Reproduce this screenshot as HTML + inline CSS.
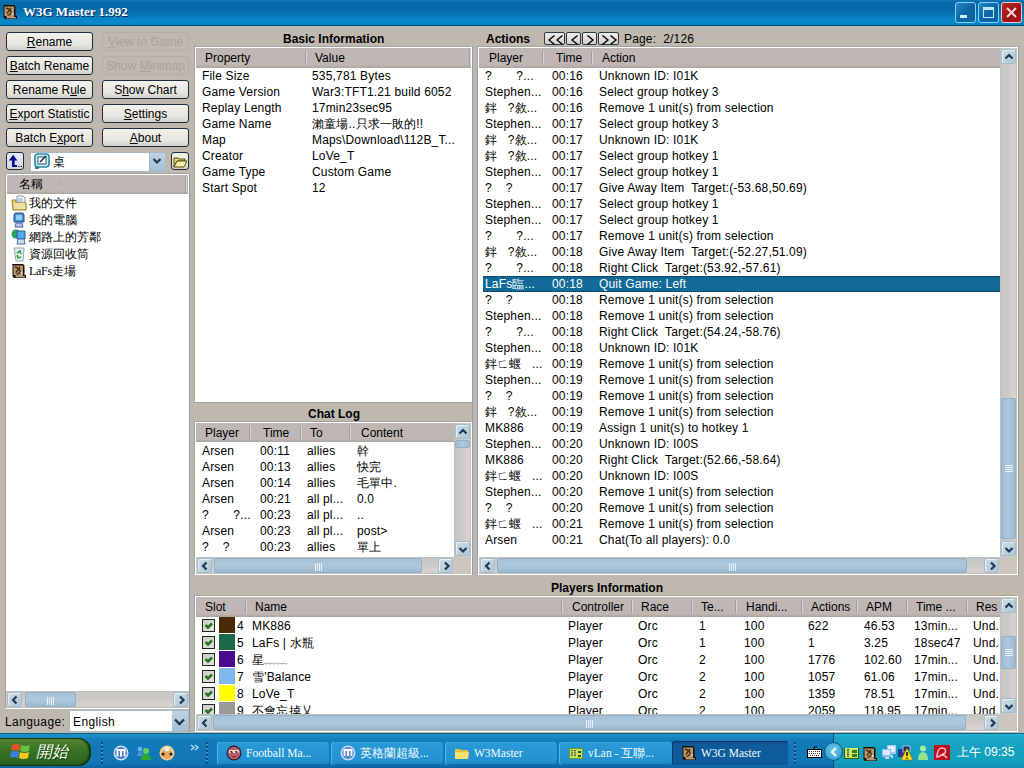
<!DOCTYPE html><html><head><meta charset="utf-8"><style>
*{margin:0;padding:0;box-sizing:border-box}
html,body{width:1024px;height:768px;overflow:hidden;background:#BFB8AF;font-family:"Liberation Sans",sans-serif;font-size:12px;color:#000}
.ab{position:absolute}
.t{position:absolute;white-space:nowrap;line-height:14px;letter-spacing:0.17px}
.btn{position:absolute;height:19px;border:1px solid #1C2C3C;border-radius:3px;background:linear-gradient(#F2F1EC,#E6E4DE 70%,#D2CFC8);text-align:center;line-height:18px;font-size:12px;white-space:nowrap}
.btn.dis{border-color:#B4AFA6;color:#A9A49C;background:#BFB8AF}
.box{position:absolute;border-top:1px solid #A6A29C;border-left:1px solid #A6A29C;border-right:1px solid #fff;border-bottom:1px solid #fff;background:#fff}
.box2{position:absolute;left:0;top:0;right:0;bottom:0;border-top:1px solid #fff;border-left:1px solid #fff}
.hdr{position:absolute;height:19px;background:linear-gradient(#BFB7B4,#BFB7B4 85%,#A9A39D);}
.hd{position:absolute;top:4px;white-space:nowrap;line-height:12px}
.dv{position:absolute;top:3px;width:1px;height:13px;background:#A49E98;box-shadow:1px 0 0 #D8D4CE}
.sb{position:absolute;width:15px;height:15px;border:1px solid #A8BCC8;border-radius:2px;background:linear-gradient(135deg,#CCDCE6,#B0C6D4);box-shadow:inset 1px 1px 0 #E4EEF4}
.trk{position:absolute;background:linear-gradient(90deg,#BCBAB6 0,#C8C6C2 1px,#CCCAC8 50%,#D8D4D0 88%,#BCBAB6 100%)}
.trkh{position:absolute;background:linear-gradient(#BCBAB6 0,#C8C6C2 1px,#CCCAC8 50%,#D8D4D0 88%,#BCBAB6 100%)}
.thumb{position:absolute;border:1px solid #98B0C4;border-radius:2px;background:linear-gradient(90deg,#9EBCD4,#AEC8DE 50%,#9CBAD2)}
.thumbh{position:absolute;border:1px solid #98B0C4;border-radius:2px;background:linear-gradient(#A4C2D8,#AEC8DE 50%,#9CBAD2)}
.title{position:absolute;font-weight:bold;white-space:nowrap;line-height:14px}
</style></head><body>
<div class="ab" style="left:0;top:0;width:1024px;height:25px;background:linear-gradient(#0C77B8 0px,#066CAB 2px,#0569A7 8px,#0874B6 14px,#0A84C8 19px,#0888CC 23px,#0880C0 25px)"></div>
<div class="ab" style="left:0;top:25px;width:1024px;height:1px;background:#0A4A72"></div>
<div class="ab" style="left:0;top:26px;width:1024px;height:1px;background:#B0C6CE"></div>
<svg class="ab" style="left:2px;top:4px" width="16" height="16" viewBox="0 0 16 16"><path d="M1 1h11l1.5 1.5V12H15v3H3l-1.5-1.5V2z" fill="#1A1008"/><path d="M2.5 2.5h9.5v10.5H4.5v-1H2.5z" fill="#B8966E"/><path d="M4 4q4 1 5 3.5T5.5 11.5M9 4L5 9.5" stroke="#4A2A10" stroke-width="1.3" fill="none"/><path d="M10 9l1.5 2" stroke="#F0E0C8" stroke-width="1.2"/><path d="M4.5 13.8h9.5" stroke="#E8D8C0" stroke-width="1"/></svg>
<div class="t" style="left:23px;top:5px;font-family:'Liberation Serif',serif;font-weight:bold;font-size:13px;letter-spacing:0;color:#fff;text-shadow:1px 1px 0 #0A2A5A">W3G Master 1.992</div>
<div class="ab" style="left:955px;top:2px;width:21px;height:21px;border:1px solid #7ED4F8;border-radius:3px;background:linear-gradient(135deg,#2A86C6,#0E66A6 50%,#0E609C)"><div class="ab" style="left:4px;top:12px;width:7px;height:3px;background:#C8ECFA"></div></div>
<div class="ab" style="left:978px;top:2px;width:21px;height:21px;border:1px solid #7ED4F8;border-radius:3px;background:linear-gradient(135deg,#2A86C6,#0E66A6 50%,#0E609C)"><div class="ab" style="left:4px;top:4px;width:11px;height:11px;border:1px solid #B8E8FA;border-top-width:3px"></div></div>
<div class="ab" style="left:1001px;top:2px;width:21px;height:21px;border:1px solid #F0C8C8;border-radius:3px;background:linear-gradient(135deg,#B82A22,#9A1212 60%,#A81814)"><svg class="ab" style="left:3px;top:3px" width="13" height="13"><path d="M2 2L11 11M11 2L2 11" stroke="#F8D4D4" stroke-width="2"/></svg></div>
<div class="btn" style="left:6px;top:32px;width:87px"><u>R</u>ename</div>
<div class="btn dis" style="left:102px;top:32px;width:87px"><u>V</u>iew In Game</div>
<div class="btn" style="left:6px;top:56px;width:87px"><u>B</u>atch Rename</div>
<div class="btn dis" style="left:102px;top:56px;width:87px">Show <u>M</u>inimap</div>
<div class="btn" style="left:6px;top:80px;width:87px">Rename R<u>u</u>le</div>
<div class="btn" style="left:102px;top:80px;width:87px">S<u>h</u>ow Chart</div>
<div class="btn" style="left:6px;top:104px;width:87px"><u>E</u>xport Statistic</div>
<div class="btn" style="left:102px;top:104px;width:87px"><u>S</u>ettings</div>
<div class="btn" style="left:6px;top:128px;width:87px">Batch E<u>x</u>port</div>
<div class="btn" style="left:102px;top:128px;width:87px"><u>A</u>bout</div>
<div class="btn" style="left:6px;top:152px;width:18px;height:18px;border-radius:3px;background:linear-gradient(#E8EEF4,#D0D8E4)"><svg class="ab" style="left:1px;top:1px" width="16" height="16"><path d="M0.8 6.6L5.2 0.8L9.4 6.6z" fill="#0A0A90"/><path d="M4 6h2.6v7H4zM4 11h5v2H4z" fill="#0A0A90"/><path d="M10.5 12.5h1.2M12.8 12.5h1.2" stroke="#000" stroke-width="1.2"/></svg></div>
<div class="ab" style="left:30px;top:152px;width:135px;height:20px;background:#fff;border:1px solid #A8B8C8;border-right:none"></div>
<div class="ab" style="left:149px;top:153px;width:16px;height:18px;background:linear-gradient(#C0D2E2,#A6BED4);border-left:1px solid #A0B4C8"><svg class="ab" style="left:0;top:0" width="15" height="15"><path d="M3.5 6L7 9.5L10.5 6" stroke="#1E3A56" stroke-width="2.2" fill="none"/></svg></div>
<svg class="ab" style="left:34px;top:153px" width="16" height="16" viewBox="0 0 16 16"><rect x="1" y="1" width="14" height="13" rx="3" fill="#C8ECF4" stroke="#2A8AA8" stroke-width="1.6"/><rect x="4" y="4" width="8" height="7" fill="#fff" stroke="#2A5A70"/><path d="M6 9L12 3" stroke="#0A2A40" stroke-width="1.5"/><path d="M1 15h4" stroke="#2A4A60" stroke-width="1.5"/></svg>
<div class="t" style="left:53px;top:155px;font-size:12px">桌</div>
<div class="btn" style="left:171px;top:152px;width:18px;height:18px"><svg class="ab" style="left:1px;top:2px" width="15" height="13"><path d="M1 3h4l1 1h6v2H4L1 12z" fill="#E8D880" stroke="#5A4A10"/><path d="M4 6h10l-3 6H1z" fill="#F8F0A0" stroke="#5A4A10"/></svg></div>
<div class="box" style="left:5px;top:173px;width:185px;height:536px"></div>
<div class="hdr" style="left:7px;top:175px;width:181px;height:19px"></div>
<div class="t" style="left:19px;top:177px;font-size:12px">名稱</div>
<div class="dv" style="left:185px;top:176px;height:16px"></div>
<div class="ab" style="left:56px;top:181px;width:0;height:0;border-left:4px solid transparent;border-right:4px solid transparent;border-bottom:4px solid #B8B0AA"></div>
<svg class="ab" style="left:11px;top:195px" width="16" height="16" viewBox="0 0 16 16"><path d="M6 1h6l2 2v5H6z" fill="#F4F8FC" stroke="#8090A0"/><path d="M7 4h5M7 6h5" stroke="#90A0B0"/><path d="M1 5h4v3h10v7H2z" fill="#E8CC70" stroke="#A08030"/><path d="M3 8h11v6H3z" fill="#F0E0A0"/></svg>
<div class="t" style="left:29px;top:196px;font-size:12px;letter-spacing:0">我的文件</div>
<svg class="ab" style="left:11px;top:212px" width="16" height="16" viewBox="0 0 16 16"><path d="M4 1h8l1 2v7H3V3z" fill="#4A90D8" stroke="#2A4A80"/><path d="M5 3h6v5H5z" fill="#90D0F8"/><path d="M5 11h6l1 4H4z" fill="#C0C8E8" stroke="#5060A0"/></svg>
<div class="t" style="left:29px;top:213px;font-size:12px;letter-spacing:0">我的電腦</div>
<svg class="ab" style="left:11px;top:229px" width="16" height="16" viewBox="0 0 16 16"><circle cx="5" cy="5" r="4.5" fill="#30A060"/><path d="M6 2h8v8H6z" fill="#50A8E8" stroke="#2A5AA0"/><path d="M7 10h6l1 5H6z" fill="#D0DCF0" stroke="#4A6AB0"/></svg>
<div class="t" style="left:29px;top:230px;font-size:12px;letter-spacing:0">網路上的芳鄰</div>
<svg class="ab" style="left:11px;top:246px" width="16" height="16" viewBox="0 0 16 16"><path d="M3 2h10l-1 13H5z" fill="#E4EEF0" stroke="#90A8A8"/><path d="M6 7l3-2 1 3M10 11l-3 1-1-3" stroke="#30A040" stroke-width="1.6" fill="none"/></svg>
<div class="t" style="left:29px;top:247px;font-size:12px;letter-spacing:0">資源回收筒</div>
<svg class="ab" style="left:11px;top:263px" width="16" height="16" viewBox="0 0 16 16"><path d="M1 1h11l1.5 1.5V12H15v3H3l-1.5-1.5V2z" fill="#1A1008"/><path d="M2.5 2.5h9.5v10.5H4.5v-1H2.5z" fill="#B8966E"/><path d="M4 4q4 1 5 3.5T5.5 11.5M9 4L5 9.5" stroke="#4A2A10" stroke-width="1.3" fill="none"/><path d="M10 9l1.5 2" stroke="#F0E0C8" stroke-width="1.2"/><path d="M4.5 13.8h9.5" stroke="#E8D8C0" stroke-width="1"/></svg>
<div class="t" style="left:29px;top:264px;font-size:12px;letter-spacing:0"><span style="font-family:'Liberation Serif',serif;letter-spacing:-0.3px">LaFs</span>走場</div>
<div class="trkh" style="left:6px;top:691px;width:183px;height:17px"></div>
<div class="sb" style="left:7px;top:692px;width:15px;height:15px"><svg class="ab" style="left:0;top:0" width="15" height="15"><path d="M8.5 3.5L5 7L8.5 10.5" stroke="#1E3A56" stroke-width="2.2" fill="none"/></svg></div>
<div class="sb" style="left:173px;top:692px;width:15px;height:15px"><svg class="ab" style="left:0;top:0" width="15" height="15"><path d="M6 3.5L9.5 7L6 10.5" stroke="#1E3A56" stroke-width="2.2" fill="none"/></svg></div>
<div class="thumbh" style="left:25px;top:692px;width:51px;height:15px"><div class="ab" style="left:21px;top:4px;width:7px;height:8px;background:repeating-linear-gradient(90deg,#E8F0F8 0 1px,transparent 1px 2px)"></div></div>
<div class="t" style="left:5px;top:715px;font-size:12px;letter-spacing:0.4px">Language:</div>
<div class="ab" style="left:69px;top:710px;width:120px;height:22px;background:#fff;border:1px solid #A8B8C8"></div>
<div class="ab" style="left:172px;top:711px;width:16px;height:20px;background:linear-gradient(#C0D2E2,#A6BED4)"><svg class="ab" style="left:0;top:3px" width="15" height="15"><path d="M3 5.5L7.5 10L12 5.5" stroke="#1E3A56" stroke-width="2.4" fill="none"/></svg></div>
<div class="t" style="left:73px;top:715px;font-size:12px;letter-spacing:0.4px">English</div>
<div class="ab" style="left:189px;top:173px;width:5px;height:559px;background:#B8B8B2;border-left:1px solid #9A9A98"></div>
<div class="ab" style="left:472px;top:46px;width:5px;height:529px;background:#B4B8BA;border-left:1px solid #9A9C9E"></div>
<div class="title" style="left:283px;top:32px">Basic Information</div>
<div class="box" style="left:194px;top:46px;width:278px;height:356px"></div>
<div class="ab" style="left:194px;top:402px;width:278px;height:1px;background:#A0A2A2"></div>
<div class="hdr" style="left:196px;top:48px;width:275px;height:20px"></div>
<div class="hd" style="left:205px;top:52px">Property</div>
<div class="dv" style="left:305px;top:51px"></div>
<div class="dv" style="left:469px;top:49px;height:16px"></div>
<div class="hd" style="left:315px;top:52px">Value</div>
<div class="t" style="left:202px;top:69px">File Size</div>
<div class="t" style="left:312px;top:69px">535,781 Bytes</div>
<div class="t" style="left:202px;top:85px">Game Version</div>
<div class="t" style="left:312px;top:85px">War3:TFT1.21 build 6052</div>
<div class="t" style="left:202px;top:101px">Replay Length</div>
<div class="t" style="left:312px;top:101px">17min23sec95</div>
<div class="t" style="left:202px;top:117px">Game Name</div>
<div class="t" style="left:312px;top:117px">瀨童場..只求一敗的!!</div>
<div class="t" style="left:202px;top:133px">Map</div>
<div class="t" style="left:312px;top:133px">Maps\Download\112B_T...</div>
<div class="t" style="left:202px;top:149px">Creator</div>
<div class="t" style="left:312px;top:149px">LoVe_T</div>
<div class="t" style="left:202px;top:165px">Game Type</div>
<div class="t" style="left:312px;top:165px">Custom Game</div>
<div class="t" style="left:202px;top:181px">Start Spot</div>
<div class="t" style="left:312px;top:181px">12</div>
<div class="title" style="left:308px;top:407px">Chat Log</div>
<div class="box" style="left:194px;top:421px;width:278px;height:154px"></div>
<div class="hdr" style="left:196px;top:423px;width:259px;height:19px"></div>
<div class="hd" style="left:205px;top:427px">Player</div>
<div class="hd" style="left:263px;top:427px">Time</div>
<div class="hd" style="left:310px;top:427px">To</div>
<div class="hd" style="left:361px;top:427px">Content</div>
<div class="dv" style="left:249px;top:426px"></div>
<div class="dv" style="left:300px;top:426px"></div>
<div class="dv" style="left:349px;top:426px"></div>
<div class="t" style="left:202px;top:444px;white-space:pre">Arsen</div>
<div class="t" style="left:260px;top:444px;white-space:pre">00:11</div>
<div class="t" style="left:307px;top:444px;white-space:pre">allies</div>
<div class="t" style="left:357px;top:444px;white-space:pre">幹</div>
<div class="t" style="left:202px;top:460px;white-space:pre">Arsen</div>
<div class="t" style="left:260px;top:460px;white-space:pre">00:13</div>
<div class="t" style="left:307px;top:460px;white-space:pre">allies</div>
<div class="t" style="left:357px;top:460px;white-space:pre">快完</div>
<div class="t" style="left:202px;top:476px;white-space:pre">Arsen</div>
<div class="t" style="left:260px;top:476px;white-space:pre">00:14</div>
<div class="t" style="left:307px;top:476px;white-space:pre">allies</div>
<div class="t" style="left:357px;top:476px;white-space:pre">毛單中.</div>
<div class="t" style="left:202px;top:492px;white-space:pre">Arsen</div>
<div class="t" style="left:260px;top:492px;white-space:pre">00:21</div>
<div class="t" style="left:307px;top:492px;white-space:pre">all pl...</div>
<div class="t" style="left:357px;top:492px;white-space:pre">0.0</div>
<div class="t" style="left:202px;top:508px;white-space:pre">?       ?...</div>
<div class="t" style="left:260px;top:508px;white-space:pre">00:23</div>
<div class="t" style="left:307px;top:508px;white-space:pre">all pl...</div>
<div class="t" style="left:357px;top:508px;white-space:pre">..</div>
<div class="t" style="left:202px;top:524px;white-space:pre">Arsen</div>
<div class="t" style="left:260px;top:524px;white-space:pre">00:23</div>
<div class="t" style="left:307px;top:524px;white-space:pre">all pl...</div>
<div class="t" style="left:357px;top:524px;white-space:pre">post&gt;</div>
<div class="t" style="left:202px;top:540px;white-space:pre">?    ?</div>
<div class="t" style="left:260px;top:540px;white-space:pre">00:23</div>
<div class="t" style="left:307px;top:540px;white-space:pre">allies</div>
<div class="t" style="left:357px;top:540px;white-space:pre">單上</div>
<div class="trk" style="left:454px;top:423px;width:17px;height:134px"></div>
<div class="sb" style="left:455px;top:424px;width:15px;height:15px"><svg class="ab" style="left:0;top:0" width="15" height="15"><path d="M3.5 8.5L7 5L10.5 8.5" stroke="#1E3A56" stroke-width="2.2" fill="none"/></svg></div>
<div class="sb" style="left:455px;top:541px;width:15px;height:15px"><svg class="ab" style="left:0;top:0" width="15" height="15"><path d="M3.5 6L7 9.5L10.5 6" stroke="#1E3A56" stroke-width="2.2" fill="none"/></svg></div>
<div class="thumb" style="left:455px;top:440px;width:15px;height:8px"></div>
<div class="trkh" style="left:196px;top:557px;width:258px;height:17px"></div>
<div class="sb" style="left:197px;top:558px;width:15px;height:15px"><svg class="ab" style="left:0;top:0" width="15" height="15"><path d="M8.5 3.5L5 7L8.5 10.5" stroke="#1E3A56" stroke-width="2.2" fill="none"/></svg></div>
<div class="sb" style="left:438px;top:558px;width:15px;height:15px"><svg class="ab" style="left:0;top:0" width="15" height="15"><path d="M6 3.5L9.5 7L6 10.5" stroke="#1E3A56" stroke-width="2.2" fill="none"/></svg></div>
<div class="thumbh" style="left:214px;top:558px;width:208px;height:15px"><div class="ab" style="left:100px;top:4px;width:7px;height:8px;background:repeating-linear-gradient(90deg,#E8F0F8 0 1px,transparent 1px 2px)"></div></div>
<div class="ab" style="left:454px;top:557px;width:17px;height:17px;background:#CCC6BE"></div>
<div class="title" style="left:486px;top:32px">Actions</div>
<div class="ab" style="left:544px;top:32px;width:21px;height:13px;border:1px solid #2A3A4A;border-radius:2px;background:linear-gradient(#ECECE8,#D4D2CC)"></div>
<div class="ab" style="left:566px;top:32px;width:15px;height:13px;border:1px solid #2A3A4A;border-radius:2px;background:linear-gradient(#ECECE8,#D4D2CC)"></div>
<div class="ab" style="left:582px;top:32px;width:15px;height:13px;border:1px solid #2A3A4A;border-radius:2px;background:linear-gradient(#ECECE8,#D4D2CC)"></div>
<div class="ab" style="left:598px;top:32px;width:21px;height:13px;border:1px solid #2A3A4A;border-radius:2px;background:linear-gradient(#ECECE8,#D4D2CC)"></div>
<svg class="ab" style="left:547.5px;top:34px" width="8" height="12"><path d="M6.5 1.5L1 6L6.5 10.5" stroke="#000" stroke-width="1.4" fill="none"/></svg>
<svg class="ab" style="left:555.5px;top:34px" width="8" height="12"><path d="M6.5 1.5L1 6L6.5 10.5" stroke="#000" stroke-width="1.4" fill="none"/></svg>
<svg class="ab" style="left:570.5px;top:34px" width="8" height="12"><path d="M6.5 1.5L1 6L6.5 10.5" stroke="#000" stroke-width="1.4" fill="none"/></svg>
<svg class="ab" style="left:586.5px;top:34px" width="8" height="12"><path d="M0.5 1.5L6 6L0.5 10.5" stroke="#000" stroke-width="1.4" fill="none"/></svg>
<svg class="ab" style="left:601.5px;top:34px" width="8" height="12"><path d="M0.5 1.5L6 6L0.5 10.5" stroke="#000" stroke-width="1.4" fill="none"/></svg>
<svg class="ab" style="left:609.5px;top:34px" width="8" height="12"><path d="M0.5 1.5L6 6L0.5 10.5" stroke="#000" stroke-width="1.4" fill="none"/></svg>
<div class="t" style="left:624px;top:32px;white-space:pre">Page:  2/126</div>
<div class="box" style="left:477px;top:46px;width:541px;height:529px"></div>
<div class="hdr" style="left:479px;top:48px;width:522px;height:20px"></div>
<div class="hd" style="left:489px;top:52px">Player</div>
<div class="hd" style="left:556px;top:52px">Time</div>
<div class="hd" style="left:602px;top:52px">Action</div>
<div class="dv" style="left:542px;top:51px"></div>
<div class="dv" style="left:591px;top:51px"></div>
<div class="t" style="left:485px;top:69px;white-space:pre;color:#000">?       ?...</div>
<div class="t" style="left:552px;top:69px;white-space:pre;color:#000">00:16</div>
<div class="t" style="left:599px;top:69px;white-space:pre;color:#000">Unknown ID: I01K</div>
<div class="t" style="left:485px;top:85px;white-space:pre;color:#000">Stephen...</div>
<div class="t" style="left:552px;top:85px;white-space:pre;color:#000">00:16</div>
<div class="t" style="left:599px;top:85px;white-space:pre;color:#000">Select group hotkey 3</div>
<div class="t" style="left:485px;top:101px;white-space:pre;color:#000">鉡   ?敘...</div>
<div class="t" style="left:552px;top:101px;white-space:pre;color:#000">00:16</div>
<div class="t" style="left:599px;top:101px;white-space:pre;color:#000">Remove 1 unit(s) from selection</div>
<div class="t" style="left:485px;top:117px;white-space:pre;color:#000">Stephen...</div>
<div class="t" style="left:552px;top:117px;white-space:pre;color:#000">00:17</div>
<div class="t" style="left:599px;top:117px;white-space:pre;color:#000">Select group hotkey 3</div>
<div class="t" style="left:485px;top:133px;white-space:pre;color:#000">鉡   ?敘...</div>
<div class="t" style="left:552px;top:133px;white-space:pre;color:#000">00:17</div>
<div class="t" style="left:599px;top:133px;white-space:pre;color:#000">Unknown ID: I01K</div>
<div class="t" style="left:485px;top:149px;white-space:pre;color:#000">鉡   ?敘...</div>
<div class="t" style="left:552px;top:149px;white-space:pre;color:#000">00:17</div>
<div class="t" style="left:599px;top:149px;white-space:pre;color:#000">Select group hotkey 1</div>
<div class="t" style="left:485px;top:165px;white-space:pre;color:#000">Stephen...</div>
<div class="t" style="left:552px;top:165px;white-space:pre;color:#000">00:17</div>
<div class="t" style="left:599px;top:165px;white-space:pre;color:#000">Select group hotkey 1</div>
<div class="t" style="left:485px;top:181px;white-space:pre;color:#000">?    ?</div>
<div class="t" style="left:552px;top:181px;white-space:pre;color:#000">00:17</div>
<div class="t" style="left:599px;top:181px;white-space:pre;color:#000">Give Away Item  Target:(-53.68,50.69)</div>
<div class="t" style="left:485px;top:197px;white-space:pre;color:#000">Stephen...</div>
<div class="t" style="left:552px;top:197px;white-space:pre;color:#000">00:17</div>
<div class="t" style="left:599px;top:197px;white-space:pre;color:#000">Select group hotkey 1</div>
<div class="t" style="left:485px;top:213px;white-space:pre;color:#000">Stephen...</div>
<div class="t" style="left:552px;top:213px;white-space:pre;color:#000">00:17</div>
<div class="t" style="left:599px;top:213px;white-space:pre;color:#000">Select group hotkey 1</div>
<div class="t" style="left:485px;top:229px;white-space:pre;color:#000">?       ?...</div>
<div class="t" style="left:552px;top:229px;white-space:pre;color:#000">00:17</div>
<div class="t" style="left:599px;top:229px;white-space:pre;color:#000">Remove 1 unit(s) from selection</div>
<div class="t" style="left:485px;top:245px;white-space:pre;color:#000">鉡   ?敘...</div>
<div class="t" style="left:552px;top:245px;white-space:pre;color:#000">00:18</div>
<div class="t" style="left:599px;top:245px;white-space:pre;color:#000">Give Away Item  Target:(-52.27,51.09)</div>
<div class="t" style="left:485px;top:261px;white-space:pre;color:#000">?       ?...</div>
<div class="t" style="left:552px;top:261px;white-space:pre;color:#000">00:18</div>
<div class="t" style="left:599px;top:261px;white-space:pre;color:#000">Right Click  Target:(53.92,-57.61)</div>
<div class="ab" style="left:483px;top:276px;width:517px;height:16px;background:#126A98;border-top:1px dotted #0A3040;border-bottom:1px dotted #0A3040"></div>
<div class="t" style="left:485px;top:277px;white-space:pre;color:#fff">LaFs臨...</div>
<div class="t" style="left:552px;top:277px;white-space:pre;color:#fff">00:18</div>
<div class="t" style="left:599px;top:277px;white-space:pre;color:#fff">Quit Game: Left</div>
<div class="t" style="left:485px;top:293px;white-space:pre;color:#000">?    ?</div>
<div class="t" style="left:552px;top:293px;white-space:pre;color:#000">00:18</div>
<div class="t" style="left:599px;top:293px;white-space:pre;color:#000">Remove 1 unit(s) from selection</div>
<div class="t" style="left:485px;top:309px;white-space:pre;color:#000">Stephen...</div>
<div class="t" style="left:552px;top:309px;white-space:pre;color:#000">00:18</div>
<div class="t" style="left:599px;top:309px;white-space:pre;color:#000">Remove 1 unit(s) from selection</div>
<div class="t" style="left:485px;top:325px;white-space:pre;color:#000">?       ?...</div>
<div class="t" style="left:552px;top:325px;white-space:pre;color:#000">00:18</div>
<div class="t" style="left:599px;top:325px;white-space:pre;color:#000">Right Click  Target:(54.24,-58.76)</div>
<div class="t" style="left:485px;top:341px;white-space:pre;color:#000">Stephen...</div>
<div class="t" style="left:552px;top:341px;white-space:pre;color:#000">00:18</div>
<div class="t" style="left:599px;top:341px;white-space:pre;color:#000">Unknown ID: I01K</div>
<div class="t" style="left:485px;top:357px;white-space:pre;color:#000">鉡ㄈ蝘   ...</div>
<div class="t" style="left:552px;top:357px;white-space:pre;color:#000">00:19</div>
<div class="t" style="left:599px;top:357px;white-space:pre;color:#000">Remove 1 unit(s) from selection</div>
<div class="t" style="left:485px;top:373px;white-space:pre;color:#000">Stephen...</div>
<div class="t" style="left:552px;top:373px;white-space:pre;color:#000">00:19</div>
<div class="t" style="left:599px;top:373px;white-space:pre;color:#000">Remove 1 unit(s) from selection</div>
<div class="t" style="left:485px;top:389px;white-space:pre;color:#000">?    ?</div>
<div class="t" style="left:552px;top:389px;white-space:pre;color:#000">00:19</div>
<div class="t" style="left:599px;top:389px;white-space:pre;color:#000">Remove 1 unit(s) from selection</div>
<div class="t" style="left:485px;top:405px;white-space:pre;color:#000">鉡   ?敘...</div>
<div class="t" style="left:552px;top:405px;white-space:pre;color:#000">00:19</div>
<div class="t" style="left:599px;top:405px;white-space:pre;color:#000">Remove 1 unit(s) from selection</div>
<div class="t" style="left:485px;top:421px;white-space:pre;color:#000">MK886</div>
<div class="t" style="left:552px;top:421px;white-space:pre;color:#000">00:19</div>
<div class="t" style="left:599px;top:421px;white-space:pre;color:#000">Assign 1 unit(s) to hotkey 1</div>
<div class="t" style="left:485px;top:437px;white-space:pre;color:#000">Stephen...</div>
<div class="t" style="left:552px;top:437px;white-space:pre;color:#000">00:20</div>
<div class="t" style="left:599px;top:437px;white-space:pre;color:#000">Unknown ID: I00S</div>
<div class="t" style="left:485px;top:453px;white-space:pre;color:#000">MK886</div>
<div class="t" style="left:552px;top:453px;white-space:pre;color:#000">00:20</div>
<div class="t" style="left:599px;top:453px;white-space:pre;color:#000">Right Click  Target:(52.66,-58.64)</div>
<div class="t" style="left:485px;top:469px;white-space:pre;color:#000">鉡ㄈ蝘   ...</div>
<div class="t" style="left:552px;top:469px;white-space:pre;color:#000">00:20</div>
<div class="t" style="left:599px;top:469px;white-space:pre;color:#000">Unknown ID: I00S</div>
<div class="t" style="left:485px;top:485px;white-space:pre;color:#000">Stephen...</div>
<div class="t" style="left:552px;top:485px;white-space:pre;color:#000">00:20</div>
<div class="t" style="left:599px;top:485px;white-space:pre;color:#000">Remove 1 unit(s) from selection</div>
<div class="t" style="left:485px;top:501px;white-space:pre;color:#000">?    ?</div>
<div class="t" style="left:552px;top:501px;white-space:pre;color:#000">00:20</div>
<div class="t" style="left:599px;top:501px;white-space:pre;color:#000">Remove 1 unit(s) from selection</div>
<div class="t" style="left:485px;top:517px;white-space:pre;color:#000">鉡ㄈ蝘   ...</div>
<div class="t" style="left:552px;top:517px;white-space:pre;color:#000">00:21</div>
<div class="t" style="left:599px;top:517px;white-space:pre;color:#000">Remove 1 unit(s) from selection</div>
<div class="t" style="left:485px;top:533px;white-space:pre;color:#000">Arsen</div>
<div class="t" style="left:552px;top:533px;white-space:pre;color:#000">00:21</div>
<div class="t" style="left:599px;top:533px;white-space:pre;color:#000">Chat(To all players): 0.0</div>
<div class="trk" style="left:1000px;top:48px;width:17px;height:509px"></div>
<div class="sb" style="left:1001px;top:49px;width:15px;height:15px"><svg class="ab" style="left:0;top:0" width="15" height="15"><path d="M3.5 8.5L7 5L10.5 8.5" stroke="#1E3A56" stroke-width="2.2" fill="none"/></svg></div>
<div class="sb" style="left:1001px;top:541px;width:15px;height:15px"><svg class="ab" style="left:0;top:0" width="15" height="15"><path d="M3.5 6L7 9.5L10.5 6" stroke="#1E3A56" stroke-width="2.2" fill="none"/></svg></div>
<div class="thumb" style="left:1001px;top:398px;width:15px;height:141px"><div class="ab" style="left:3px;top:66px;width:8px;height:7px;background:repeating-linear-gradient(#E8F0F8 0 1px,transparent 1px 2px)"></div></div>
<div class="ab" style="left:1018px;top:46px;width:1px;height:529px;background:#949898"></div>
<div class="trkh" style="left:479px;top:557px;width:521px;height:17px"></div>
<div class="sb" style="left:480px;top:558px;width:15px;height:15px"><svg class="ab" style="left:0;top:0" width="15" height="15"><path d="M8.5 3.5L5 7L8.5 10.5" stroke="#1E3A56" stroke-width="2.2" fill="none"/></svg></div>
<div class="sb" style="left:984px;top:558px;width:15px;height:15px"><svg class="ab" style="left:0;top:0" width="15" height="15"><path d="M6 3.5L9.5 7L6 10.5" stroke="#1E3A56" stroke-width="2.2" fill="none"/></svg></div>
<div class="thumbh" style="left:497px;top:558px;width:470px;height:15px"><div class="ab" style="left:231px;top:4px;width:7px;height:8px;background:repeating-linear-gradient(90deg,#E8F0F8 0 1px,transparent 1px 2px)"></div></div>
<div class="ab" style="left:1000px;top:557px;width:17px;height:17px;background:#CCC6BE"></div>
<div class="title" style="left:551px;top:581px">Players Information</div>
<div class="box" style="left:194px;top:595px;width:824px;height:137px"></div>
<div class="hdr" style="left:196px;top:597px;width:805px;height:20px"></div>
<div class="hd" style="left:205px;top:601px">Slot</div>
<div class="hd" style="left:255px;top:601px">Name</div>
<div class="hd" style="left:572px;top:601px">Controller</div>
<div class="hd" style="left:641px;top:601px">Race</div>
<div class="hd" style="left:701px;top:601px">Te...</div>
<div class="hd" style="left:746px;top:601px">Handi...</div>
<div class="hd" style="left:811px;top:601px">Actions</div>
<div class="hd" style="left:866px;top:601px">APM</div>
<div class="hd" style="left:916px;top:601px">Time ...</div>
<div class="hd" style="left:976px;top:601px">Res</div>
<div class="dv" style="left:245px;top:600px"></div>
<div class="dv" style="left:561px;top:600px"></div>
<div class="dv" style="left:631px;top:600px"></div>
<div class="dv" style="left:691px;top:600px"></div>
<div class="dv" style="left:735px;top:600px"></div>
<div class="dv" style="left:801px;top:600px"></div>
<div class="dv" style="left:856px;top:600px"></div>
<div class="dv" style="left:906px;top:600px"></div>
<div class="dv" style="left:966px;top:600px"></div>
<div class="ab" style="left:196px;top:616px;width:805px;height:98px;overflow:hidden">
<div class="ab" style="left:6px;top:3px;width:13px;height:13px;border:1px solid #1C2A1C;background:linear-gradient(135deg,#C8D0C8,#E0E4DC)"><svg class="ab" style="left:0px;top:0px" width="11" height="11"><path d="M2.5 5L5 7.5L9 3.5" stroke="#2E6A28" stroke-width="2.6" fill="none"/></svg></div>
<div class="ab" style="left:23px;top:1px;width:16px;height:16px;background:#4A2A08"></div>
<div class="t" style="left:41px;top:3px">4</div>
<div class="t" style="left:56px;top:3px">MK886</div>
<div class="t" style="left:372px;top:3px">Player</div>
<div class="t" style="left:442px;top:3px">Orc</div>
<div class="t" style="left:503px;top:3px">1</div>
<div class="t" style="left:548px;top:3px">100</div>
<div class="t" style="left:612px;top:3px">622</div>
<div class="t" style="left:668px;top:3px">46.53</div>
<div class="t" style="left:718px;top:3px">13min...</div>
<div class="t" style="left:777px;top:3px">Und.</div>
<div class="ab" style="left:6px;top:20px;width:13px;height:13px;border:1px solid #1C2A1C;background:linear-gradient(135deg,#C8D0C8,#E0E4DC)"><svg class="ab" style="left:0px;top:0px" width="11" height="11"><path d="M2.5 5L5 7.5L9 3.5" stroke="#2E6A28" stroke-width="2.6" fill="none"/></svg></div>
<div class="ab" style="left:23px;top:18px;width:16px;height:16px;background:#1A6A4A"></div>
<div class="t" style="left:41px;top:20px">5</div>
<div class="t" style="left:56px;top:20px">LaFs | 水瓶</div>
<div class="t" style="left:372px;top:20px">Player</div>
<div class="t" style="left:442px;top:20px">Orc</div>
<div class="t" style="left:503px;top:20px">1</div>
<div class="t" style="left:548px;top:20px">100</div>
<div class="t" style="left:612px;top:20px">1</div>
<div class="t" style="left:668px;top:20px">3.25</div>
<div class="t" style="left:718px;top:20px">18sec47</div>
<div class="t" style="left:777px;top:20px">Und.</div>
<div class="ab" style="left:6px;top:37px;width:13px;height:13px;border:1px solid #1C2A1C;background:linear-gradient(135deg,#C8D0C8,#E0E4DC)"><svg class="ab" style="left:0px;top:0px" width="11" height="11"><path d="M2.5 5L5 7.5L9 3.5" stroke="#2E6A28" stroke-width="2.6" fill="none"/></svg></div>
<div class="ab" style="left:23px;top:35px;width:16px;height:16px;background:#4A0A90"></div>
<div class="t" style="left:41px;top:37px">6</div>
<div class="t" style="left:56px;top:37px">星﹏﹏</div>
<div class="t" style="left:372px;top:37px">Player</div>
<div class="t" style="left:442px;top:37px">Orc</div>
<div class="t" style="left:503px;top:37px">2</div>
<div class="t" style="left:548px;top:37px">100</div>
<div class="t" style="left:612px;top:37px">1776</div>
<div class="t" style="left:668px;top:37px">102.60</div>
<div class="t" style="left:718px;top:37px">17min...</div>
<div class="t" style="left:777px;top:37px">Und.</div>
<div class="ab" style="left:6px;top:54px;width:13px;height:13px;border:1px solid #1C2A1C;background:linear-gradient(135deg,#C8D0C8,#E0E4DC)"><svg class="ab" style="left:0px;top:0px" width="11" height="11"><path d="M2.5 5L5 7.5L9 3.5" stroke="#2E6A28" stroke-width="2.6" fill="none"/></svg></div>
<div class="ab" style="left:23px;top:52px;width:16px;height:16px;background:#80B8F0"></div>
<div class="t" style="left:41px;top:54px">7</div>
<div class="t" style="left:56px;top:54px">雪&#x27;Balance</div>
<div class="t" style="left:372px;top:54px">Player</div>
<div class="t" style="left:442px;top:54px">Orc</div>
<div class="t" style="left:503px;top:54px">2</div>
<div class="t" style="left:548px;top:54px">100</div>
<div class="t" style="left:612px;top:54px">1057</div>
<div class="t" style="left:668px;top:54px">61.06</div>
<div class="t" style="left:718px;top:54px">17min...</div>
<div class="t" style="left:777px;top:54px">Und.</div>
<div class="ab" style="left:6px;top:71px;width:13px;height:13px;border:1px solid #1C2A1C;background:linear-gradient(135deg,#C8D0C8,#E0E4DC)"><svg class="ab" style="left:0px;top:0px" width="11" height="11"><path d="M2.5 5L5 7.5L9 3.5" stroke="#2E6A28" stroke-width="2.6" fill="none"/></svg></div>
<div class="ab" style="left:23px;top:69px;width:16px;height:16px;background:#FFFF00"></div>
<div class="t" style="left:41px;top:71px">8</div>
<div class="t" style="left:56px;top:71px">LoVe_T</div>
<div class="t" style="left:372px;top:71px">Player</div>
<div class="t" style="left:442px;top:71px">Orc</div>
<div class="t" style="left:503px;top:71px">2</div>
<div class="t" style="left:548px;top:71px">100</div>
<div class="t" style="left:612px;top:71px">1359</div>
<div class="t" style="left:668px;top:71px">78.51</div>
<div class="t" style="left:718px;top:71px">17min...</div>
<div class="t" style="left:777px;top:71px">Und.</div>
<div class="ab" style="left:6px;top:88px;width:13px;height:13px;border:1px solid #1C2A1C;background:linear-gradient(135deg,#C8D0C8,#E0E4DC)"><svg class="ab" style="left:0px;top:0px" width="11" height="11"><path d="M2.5 5L5 7.5L9 3.5" stroke="#2E6A28" stroke-width="2.6" fill="none"/></svg></div>
<div class="ab" style="left:23px;top:86px;width:16px;height:16px;background:#9A9A9A"></div>
<div class="t" style="left:41px;top:88px">9</div>
<div class="t" style="left:56px;top:88px">不會忘掉乂</div>
<div class="t" style="left:372px;top:88px">Player</div>
<div class="t" style="left:442px;top:88px">Orc</div>
<div class="t" style="left:503px;top:88px">2</div>
<div class="t" style="left:548px;top:88px">100</div>
<div class="t" style="left:612px;top:88px">2059</div>
<div class="t" style="left:668px;top:88px">118.95</div>
<div class="t" style="left:718px;top:88px">17min...</div>
<div class="t" style="left:777px;top:88px">Und.</div>
</div>
<div class="trk" style="left:1000px;top:597px;width:17px;height:117px"></div>
<div class="sb" style="left:1001px;top:598px;width:15px;height:15px"><svg class="ab" style="left:0;top:0" width="15" height="15"><path d="M3.5 8.5L7 5L10.5 8.5" stroke="#1E3A56" stroke-width="2.2" fill="none"/></svg></div>
<div class="sb" style="left:1001px;top:698px;width:15px;height:15px"><svg class="ab" style="left:0;top:0" width="15" height="15"><path d="M3.5 6L7 9.5L10.5 6" stroke="#1E3A56" stroke-width="2.2" fill="none"/></svg></div>
<div class="thumb" style="left:1001px;top:636px;width:15px;height:33px"><div class="ab" style="left:3px;top:12px;width:8px;height:7px;background:repeating-linear-gradient(#E8F0F8 0 1px,transparent 1px 2px)"></div></div>
<div class="trkh" style="left:196px;top:714px;width:804px;height:17px"></div>
<div class="sb" style="left:197px;top:715px;width:15px;height:15px"><svg class="ab" style="left:0;top:0" width="15" height="15"><path d="M8.5 3.5L5 7L8.5 10.5" stroke="#1E3A56" stroke-width="2.2" fill="none"/></svg></div>
<div class="sb" style="left:984px;top:715px;width:15px;height:15px"><svg class="ab" style="left:0;top:0" width="15" height="15"><path d="M6 3.5L9.5 7L6 10.5" stroke="#1E3A56" stroke-width="2.2" fill="none"/></svg></div>
<div class="thumbh" style="left:213px;top:715px;width:753px;height:15px"><div class="ab" style="left:372px;top:4px;width:7px;height:8px;background:repeating-linear-gradient(90deg,#E8F0F8 0 1px,transparent 1px 2px)"></div></div>
<div class="ab" style="left:1000px;top:714px;width:17px;height:17px;background:#CCC6BE"></div>
<div class="ab" style="left:0;top:733px;width:1024px;height:35px;background:linear-gradient(#0A6488 0px,#0A6488 1px,#1E90C4 1px,#1A8AC2 4px,#1480BC 6px,#127AB8 9px,#1276B4 30px,#0C62A2 35px)"></div>
<div class="ab" style="left:0;top:738px;width:91px;height:28px;border-radius:0 13px 13px 0;background:linear-gradient(#5C8238,#4E7E30 12%,#3A7426 40%,#306A20 75%,#28561A);box-shadow:inset 0 1px 0 #1A3A0E,inset -2px 0 2px #142E0C,inset 0 -1px 0 #1A3A0E"></div>
<svg class="ab" style="left:10px;top:742px" width="21" height="19"><path d="M2 3Q6 1 10 3L9 9Q5 7 1 9z" fill="#E8502A"/><path d="M11 3Q15 5 20 3L19 9Q15 11 10 9z" fill="#6AC040"/><path d="M1 10Q5 8 9 10L8 16Q4 14 0 16z" fill="#3A80E0"/><path d="M10 10Q14 12 19 10L18 16Q14 18 9 16z" fill="#F8C820"/></svg>
<div class="t" style="left:36px;top:743px;font-family:'Liberation Serif',serif;font-size:16px;line-height:18px;font-style:italic;color:#F4FFF0;letter-spacing:0;text-shadow:1px 1px 1px #1a3a10">開始</div>
<div class="ab" style="left:101px;top:742px;width:2px;height:22px;background:repeating-linear-gradient(#0A4A80 0 2px,#48A0D8 2px 3px,transparent 3px 4px)"></div>
<div class="ab" style="left:206px;top:742px;width:2px;height:22px;background:repeating-linear-gradient(#0A4A80 0 2px,#48A0D8 2px 3px,transparent 3px 4px)"></div>
<svg class="ab" style="left:113px;top:745px" width="16" height="16"><circle cx="8" cy="8" r="7.5" fill="#D0E4F8"/><circle cx="8" cy="8" r="6" fill="#4A7ACC"/><path d="M4.5 11.5V5h7v6.5M8 5v6.5" stroke="#fff" stroke-width="2" fill="none"/></svg>
<svg class="ab" style="left:136px;top:745px" width="16" height="16"><circle cx="4" cy="4" r="2.5" fill="#60B0F0"/><path d="M1 11q0-4 3-4t3 4z" fill="#4A90D8"/><circle cx="10" cy="6" r="3" fill="#60D060"/><path d="M5 15q0-6 5-6t5 6z" fill="#30A830"/></svg>
<svg class="ab" style="left:159px;top:745px" width="16" height="16"><circle cx="8" cy="8" r="7.5" fill="#F0C890"/><circle cx="8" cy="9" r="5" fill="#E8A860"/><circle cx="4" cy="9" r="1.6" fill="#3A1A10"/><circle cx="12" cy="9" r="1.6" fill="#3A1A10"/><circle cx="8" cy="4" r="2.5" fill="#F8F0E8"/></svg>
<svg class="ab" style="left:190px;top:744px" width="10" height="7"><path d="M1 1L4 3.5L1 6M5 1L8 3.5L5 6" stroke="#B8DCF8" stroke-width="1.3" fill="none"/></svg>
<div class="ab" style="left:217px;top:742px;width:112px;height:23px;border-radius:3px;background:linear-gradient(#38A4DC,#2898D6 12%,#2292D0 80%,#1C84C0);box-shadow:inset 1px 0 0 #50B8EC,inset 0 -1px 0 #1670A8"></div>
<svg class="ab" style="left:226px;top:745px" width="16" height="16" viewBox="0 0 16 16"><circle cx="8" cy="8" r="7.5" fill="#2A1A2A"/><circle cx="8" cy="8" r="6.3" fill="#B06070"/><path d="M3 5h10v3H3z" fill="#F0D0C0"/><path d="M4 6h2l1 2H5zM9 6h2l1 2h-2z" fill="#6A2A3A"/><path d="M5 11q3 3 6 0" fill="#C02030"/></svg>
<div class="t" style="left:246px;top:746px;font-family:'Liberation Serif',serif;font-size:11.5px;letter-spacing:0;color:#F0FCFF">Football Ma...</div>
<div class="ab" style="left:331px;top:742px;width:112px;height:23px;border-radius:3px;background:linear-gradient(#38A4DC,#2898D6 12%,#2292D0 80%,#1C84C0);box-shadow:inset 1px 0 0 #50B8EC,inset 0 -1px 0 #1670A8"></div>
<svg class="ab" style="left:340px;top:745px" width="16" height="16" viewBox="0 0 16 16"><circle cx="8" cy="8" r="7.5" fill="#C8DCF4"/><circle cx="8" cy="8" r="6" fill="#5A8AD0"/><path d="M4.5 11V5h7v6M8 5v6" stroke="#fff" stroke-width="1.8" fill="none"/></svg>
<div class="t" style="left:360px;top:746px;font-family:'Liberation Serif',serif;font-size:11.5px;letter-spacing:0;color:#F0FCFF">英格蘭超級...</div>
<div class="ab" style="left:445px;top:742px;width:112px;height:23px;border-radius:3px;background:linear-gradient(#38A4DC,#2898D6 12%,#2292D0 80%,#1C84C0);box-shadow:inset 1px 0 0 #50B8EC,inset 0 -1px 0 #1670A8"></div>
<svg class="ab" style="left:454px;top:745px" width="16" height="16" viewBox="0 0 16 16"><path d="M1 4h5l1 1h7v9H1z" fill="#E8C040"/><path d="M1 7h14l-1 7H1z" fill="#F8E070"/></svg>
<div class="t" style="left:474px;top:746px;font-family:'Liberation Serif',serif;font-size:11.5px;letter-spacing:0;color:#F0FCFF">W3Master</div>
<div class="ab" style="left:559px;top:742px;width:113px;height:23px;border-radius:3px;background:linear-gradient(#38A4DC,#2898D6 12%,#2292D0 80%,#1C84C0);box-shadow:inset 1px 0 0 #50B8EC,inset 0 -1px 0 #1670A8"></div>
<svg class="ab" style="left:568px;top:745px" width="16" height="16" viewBox="0 0 16 16"><path d="M1 3h14v11H1z" fill="#6A9A20"/><path d="M2 4h12v9H2z" fill="#C8E060"/><path d="M4 5v7M7 5v7" stroke="#222" stroke-width="1.3" stroke-dasharray="1.3 1"/><path d="M10 6h3v2h-3zM10 10h3v2h-3z" fill="#2A5A10"/></svg>
<div class="t" style="left:588px;top:746px;font-family:'Liberation Serif',serif;font-size:11.5px;letter-spacing:0;color:#F0FCFF">vLan - 互聯...</div>
<div class="ab" style="left:672px;top:741px;width:116px;height:24px;border-radius:3px;background:linear-gradient(#0A4C84,#0E5A9A 15%,#0E5C9C 85%,#0C548E);box-shadow:inset 1px 1px 0 #083A66"></div>
<svg class="ab" style="left:681px;top:745px" width="16" height="16" viewBox="0 0 16 16"><path d="M1 1h11l1.5 1.5V12H15v3H3l-1.5-1.5V2z" fill="#1A1008"/><path d="M2.5 2.5h9.5v10.5H4.5v-1H2.5z" fill="#B8966E"/><path d="M4 4q4 1 5 3.5T5.5 11.5M9 4L5 9.5" stroke="#4A2A10" stroke-width="1.3" fill="none"/><path d="M10 9l1.5 2" stroke="#F0E0C8" stroke-width="1.2"/><path d="M4.5 13.8h9.5" stroke="#E8D8C0" stroke-width="1"/></svg>
<div class="t" style="left:701px;top:746px;font-family:'Liberation Serif',serif;font-size:11.5px;letter-spacing:0;color:#F0FCFF">W3G Master</div>
<div class="ab" style="left:794px;top:742px;width:2px;height:22px;background:repeating-linear-gradient(#0A4A80 0 2px,#48A0D8 2px 3px,transparent 3px 4px)"></div>
<svg class="ab" style="left:807px;top:746px" width="15" height="12"><path d="M7 3V1h3" stroke="#000" fill="none"/><rect x="0.5" y="3.5" width="14" height="8" fill="#fff" stroke="#000"/><path d="M2 5.5h11M2 7.5h11M3 9.5h9" stroke="#333" stroke-dasharray="1 1"/></svg>
<div class="ab" style="left:833px;top:733px;width:191px;height:35px;background:linear-gradient(#0A6488 0px,#0A6488 1px,#22B0D0 1px,#1AA8C8 5px,#16A2C2 12px,#12A0BE 28px,#0E90B2 35px);border-left:1px solid #0A4A6A"></div>
<div class="ab" style="left:824px;top:742px;width:19px;height:19px;border-radius:50%;background:radial-gradient(circle at 50% 40%,#6AC8E8,#2A98C8);border:1px solid #0A5A80"><svg class="ab" style="left:3px;top:3px" width="12" height="12"><path d="M8 2L4 6L8 10" stroke="#E8FCFF" stroke-width="2.2" fill="none"/></svg></div>
<svg class="ab" style="left:844px;top:747px" width="16" height="16" viewBox="0 0 16 16"><path d="M0 1h15v11H0z" fill="#2A5A10"/><path d="M1 1h13v10H1z" fill="#C8E868"/><path d="M4 2v8" stroke="#111" stroke-width="1.4" stroke-dasharray="1.4 1"/><path d="M8 3h5v3H8zM8 7h5v3H8z" fill="#3A7A20"/></svg>
<svg class="ab" style="left:862px;top:746px" width="16" height="16" viewBox="0 0 16 16"><path d="M1 1h11l1.5 1.5V12H15v3H3l-1.5-1.5V2z" fill="#1A1008"/><path d="M2.5 2.5h9.5v10.5H4.5v-1H2.5z" fill="#B8966E"/><path d="M4 4q4 1 5 3.5T5.5 11.5M9 4L5 9.5" stroke="#4A2A10" stroke-width="1.3" fill="none"/><path d="M10 9l1.5 2" stroke="#F0E0C8" stroke-width="1.2"/><path d="M4.5 13.8h9.5" stroke="#E8D8C0" stroke-width="1"/></svg>
<svg class="ab" style="left:881px;top:745px" width="16" height="16" viewBox="0 0 16 16"><path d="M6 0h9v9H6z" fill="#A8C8F0"/><path d="M7 1h7v6H7z" fill="#E0F0FF"/><path d="M1 4h9v8H1z" fill="#90B8F0"/><path d="M2 5h7v5H2z" fill="#D8ECFF"/><path d="M4 13h4M11 10v3" stroke="#E8F4FF" stroke-width="1.5"/></svg>
<svg class="ab" style="left:898px;top:745px" width="16" height="16" viewBox="0 0 16 16"><path d="M0 4h9v8H0z" fill="#2A3A8A"/><path d="M5 1h7v6H5z" fill="#1A2A6A" stroke="#C8E0F8" stroke-width=".8"/><path d="M9 3L15 15H3z" fill="#F8E020" stroke="#806000" stroke-width=".6"/><path d="M9 7v4M9 12.5v1.2" stroke="#000" stroke-width="1.5"/></svg>
<svg class="ab" style="left:918px;top:745px" width="16" height="16" viewBox="0 0 16 16"><circle cx="5" cy="3.5" r="3" fill="#A8E8A0"/><path d="M0 15q0-8 5-8t5 8z" fill="#90E090"/></svg>
<svg class="ab" style="left:934px;top:745px" width="16" height="16" viewBox="0 0 16 16"><path d="M0 0h16v15H0z" fill="#C01020"/><path d="M3 13Q3 3 8 3q5 0 3 5L4 12M9 9l4 4" stroke="#F8B8C0" stroke-width="1.6" fill="none"/></svg>
<div class="t" style="left:957px;top:745px;font-size:12px;color:#fff;letter-spacing:0">上午 09:35</div>
</body></html>
